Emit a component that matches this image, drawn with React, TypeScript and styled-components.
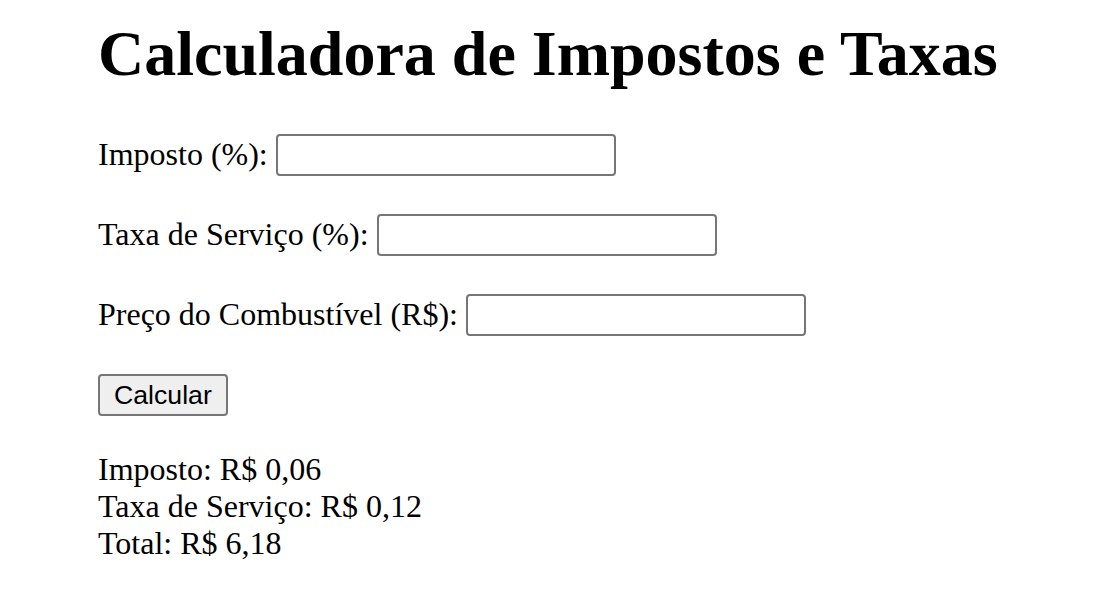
import React from "react";
import styled, { createGlobalStyle } from "styled-components";

const Global = createGlobalStyle`
  html, body { margin: 0; padding: 0; background: #fff; }
  body { font-family: "Liberation Serif", "Times New Roman", serif; color: #000; }
`;

const Page = styled.div`
  padding: 17px 0 0 98px;
  font-size: 32px;
  line-height: normal;
`;

const Title = styled.h1`
  margin: 0 0 43px;
  font-size: 64px;
  line-height: 74px;
  font-weight: bold;
`;

const Form = styled.form`
  display: flex;
  flex-direction: column;
  align-items: flex-start;
  gap: 38px;
`;

const Row = styled.div`
  display: flex;
  align-items: center;
  gap: 8px;
  height: 42px;
`;

const Label = styled.label`
  font-size: 32px;
  position: relative;
  top: -1px;
`;

const Input = styled.input`
  box-sizing: border-box;
  width: 340px;
  height: 42px;
  border: 2px solid #767676;
  border-radius: 4px;
  padding: 2px 4px;
  font-family: "Liberation Sans", Arial, sans-serif;
  font-size: 26.67px;
  background: #fff;
  outline: none;
`;

const Button = styled.button`
  box-sizing: border-box;
  height: 42px;
  padding: 2px 14px;
  border: 2px solid #767676;
  border-radius: 4px;
  background: #efefef;
  font-family: "Liberation Sans", Arial, sans-serif;
  font-size: 26.67px;
  color: #000;
`;

const Results = styled.div`
  margin-top: 35px;
  font-size: 32px;
  line-height: 36.8px;
`;

const Line = styled.div``;

export default function App() {
  return (
    <>
      <Global />
      <Page>
        <Title>Calculadora de Impostos e Taxas</Title>
        <Form onSubmit={(e) => e.preventDefault()}>
          <Row>
            <Label htmlFor="imposto">Imposto (%):</Label>
            <Input id="imposto" type="text" />
          </Row>
          <Row>
            <Label htmlFor="taxa">Taxa de Serviço (%):</Label>
            <Input id="taxa" type="text" />
          </Row>
          <Row>
            <Label htmlFor="preco">Preço do Combustível (R$):</Label>
            <Input id="preco" type="text" />
          </Row>
          <Button type="submit">Calcular</Button>
        </Form>
        <Results>
          <Line>Imposto: R$ 0,06</Line>
          <Line>Taxa de Serviço: R$ 0,12</Line>
          <Line>Total: R$ 6,18</Line>
        </Results>
      </Page>
    </>
  );
}
